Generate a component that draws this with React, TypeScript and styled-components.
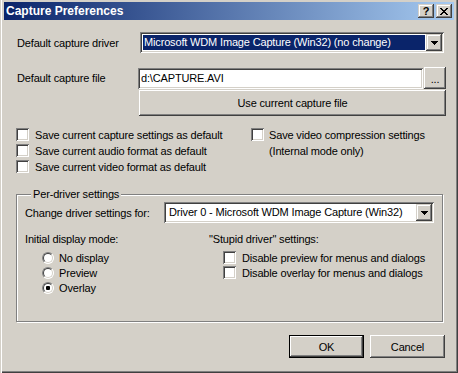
import React from 'react';
import styled, { createGlobalStyle, css } from 'styled-components';

const GlobalStyle = createGlobalStyle`
  html, body {
    margin: 0;
    padding: 0;
    background: #d4d0c8;
  }
  body {
    font-family: "Liberation Sans", Arial, sans-serif;
    font-size: 11px;
    letter-spacing: -0.16px;
    color: #000;
  }
`;

// classic 3D bevels
const raised = css`
  box-shadow: inset -1px -1px #404040, inset 1px 1px #fff, inset -2px -2px #808080;
`;

const raisedSmall = css`
  box-shadow: inset -1px -1px #404040, inset 1px 1px #d4d0c8, inset -2px -2px #808080, inset 2px 2px #fff;
`;

const sunken = css`
  box-shadow: inset 1px 1px #808080, inset -1px -1px #fff, inset 2px 2px #404040, inset -2px -2px #d4d0c8;
`;

const Window = styled.div`
  width: 458px;
  height: 373px;
  box-sizing: border-box;
  padding: 2px 4px 4px 4px;
  background: #d4d0c8;
  box-shadow: inset 1px 0 #d4d0c8, inset 2px 0 #fff, inset -1px -1px #404040, inset -2px -2px #808080;
  display: flex;
  flex-direction: column;
`;

const TitleBar = styled.div`
  height: 18px;
  display: flex;
  align-items: center;
  padding: 0 2px;
  background: linear-gradient(to right, #0a246a, #a6caf0);
`;

const Title = styled.span`
  flex: 1;
  color: #fff;
  font-weight: bold;
  font-size: 12px;
  letter-spacing: 0;
  line-height: 18px;
`;

const CaptionButton = styled.div<{ $gap?: number }>`
  width: 16px;
  height: 14px;
  margin-left: ${p => p.$gap || 0}px;
  background: #d4d0c8;
  ${raisedSmall}
  display: flex;
  align-items: center;
  justify-content: center;
  font-weight: bold;
  font-size: 11px;
  line-height: 14px;
`;

const Client = styled.div`
  flex: 1;
  display: flex;
  flex-direction: column;
`;

const FieldRow = styled.div<{ $top: number; $height: number }>`
  display: flex;
  align-items: center;
  margin-top: ${p => p.$top}px;
  padding-left: 13px;
  height: ${p => p.$height}px;
`;

const FieldLabel = styled.span<{ $width: number }>`
  width: ${p => p.$width}px;
  flex: none;
`;

const Combo = styled.div<{ $width: number }>`
  width: ${p => p.$width}px;
  height: 21px;
  box-sizing: border-box;
  padding: 2px;
  background: #fff;
  ${sunken}
  display: flex;
  flex: none;
`;

const ComboText = styled.div<{ $selected?: boolean }>`
  flex: 1;
  margin: 1px;
  padding-left: ${p => (p.$selected ? 1 : 2)}px;
  line-height: 15px;
  white-space: nowrap;
  overflow: hidden;
  background: ${p => (p.$selected ? '#0a246a' : 'transparent')};
  color: ${p => (p.$selected ? '#fff' : '#000')};
`;

const DropButton = styled.div`
  width: 16px;
  height: 17px;
  background: #d4d0c8;
  ${raisedSmall}
  display: flex;
  align-items: center;
  justify-content: center;
`;

const TextField = styled.div<{ $width: number }>`
  width: ${p => p.$width}px;
  height: 21px;
  box-sizing: border-box;
  padding: 2px 3px;
  line-height: 17px;
  background: #fff;
  ${sunken}
  flex: none;
`;

const PushButton = styled.div<{ $width: number; $height: number; $default?: boolean }>`
  width: ${p => p.$width}px;
  height: ${p => p.$height}px;
  box-sizing: border-box;
  background: #d4d0c8;
  display: flex;
  align-items: center;
  justify-content: center;
  flex: none;
  ${p =>
    p.$default
      ? css`
          border: 1px solid #000;
          ${raised}
        `
      : raised}
`;

const Browse = styled(PushButton)`
  margin-left: 1px;
  align-items: flex-end;
  padding-bottom: 4px;
  align-self: flex-start;
`;

const UseButton = styled(PushButton)`
  margin: 1px 0 0 135px;
`;

const CheckGrid = styled.div`
  display: grid;
  grid-template-columns: 235px 1fr;
  grid-auto-rows: 16px;
  margin: 11px 0 0 12px;
`;

const CheckItem = styled.label<{ $gap?: number }>`
  display: flex;
  align-items: flex-start;
  gap: ${p => p.$gap ?? 6}px;
  line-height: 16px;
`;

const CheckBox = styled.span`
  width: 13px;
  height: 13px;
  flex: none;
  margin-top: 1px;
  background: #fff;
  ${sunken}
`;

const Group = styled.fieldset`
  margin: 13px 0 0 12px;
  padding: 1px 8px 0 8px;
  width: 427px;
  height: 134px;
  box-sizing: border-box;
  border: 1px solid #808080;
  box-shadow: 1px 1px 0 #fff, inset 1px 1px 0 #fff;
  min-inline-size: auto;
`;

const Legend = styled.legend`
  margin-left: 6px;
  padding: 0 2px;
  line-height: 13px;
  background: #d4d0c8;
`;

const GroupRow = styled.div`
  display: flex;
  align-items: center;
  height: 21px;
`;

const Columns = styled.div`
  display: grid;
  grid-template-columns: 184px 1fr;
  margin-top: 10px;
`;

const Column = styled.div`
  display: flex;
  flex-direction: column;
`;

const Heading = styled.div`
  line-height: 13px;
  margin-bottom: 4px;
`;

const OptionRow = styled.label<{ $indent: number; $gap: number }>`
  display: flex;
  align-items: center;
  height: 15px;
  padding-left: ${p => p.$indent}px;
  gap: ${p => p.$gap}px;
`;

const Radio = styled.span<{ $checked?: boolean }>`
  position: relative;
  width: 12px;
  height: 12px;
  flex: none;
  box-sizing: border-box;
  border-radius: 50%;
  border: 1px solid;
  border-color: #808080 #fff #fff #808080;
  background: #fff;

  &::before {
    content: '';
    position: absolute;
    inset: 0;
    border-radius: 50%;
    border: 1px solid;
    border-color: #404040 #d4d0c8 #d4d0c8 #404040;
  }

  &::after {
    content: '';
    display: ${p => (p.$checked ? 'block' : 'none')};
    position: absolute;
    left: 3px;
    top: 3px;
    width: 4px;
    height: 4px;
    border-radius: 1px;
    background: #000;
  }
`;

const SmallCheck = styled(CheckBox)`
  margin-top: 0;
`;

const Footer = styled.div`
  margin-top: auto;
  display: flex;
  justify-content: flex-end;
  gap: 6px;
  padding: 0 9px 11px 0;
`;

const Arrow = () => (
  <svg width="7" height="4" viewBox="0 0 7 4">
    <path d="M0 0h7v1H0zM1 1h5v1H1zM2 2h3v1H2zM3 3h1v1H3z" fill="#000" />
  </svg>
);

const CloseGlyph = () => (
  <svg width="8" height="7" viewBox="0 0 8 7">
    <path
      d="M0 0h2v1H0zM6 0h2v1H6zM1 1h2v1H1zM5 1h2v1H5zM2 2h4v1H2zM3 3h2v1H3zM2 4h4v1H2zM1 5h2v1H1zM5 5h2v1H5zM0 6h2v1H0zM6 6h2v1H6z"
      fill="#000"
    />
  </svg>
);

const topChecks = [
  'Save current capture settings as default',
  'Save current audio format as default',
  'Save current video format as default',
];

const modes = [
  { label: 'No display', checked: false },
  { label: 'Preview', checked: false },
  { label: 'Overlay', checked: true },
];

const stupidOptions = ['Disable preview for menus and dialogs', 'Disable overlay for menus and dialogs'];

export default function App() {
  return (
    <>
      <GlobalStyle />
      <Window>
        <TitleBar>
          <Title>Capture Preferences</Title>
          <CaptionButton>?</CaptionButton>
          <CaptionButton $gap={2}>
            <CloseGlyph />
          </CaptionButton>
        </TitleBar>

        <Client>
          <FieldRow $top={12} $height={21}>
            <FieldLabel $width={123}>Default capture driver</FieldLabel>
            <Combo $width={304}>
              <ComboText $selected>Microsoft WDM Image Capture (Win32) (no change)</ComboText>
              <DropButton>
                <Arrow />
              </DropButton>
            </Combo>
          </FieldRow>

          <FieldRow $top={14} $height={22}>
            <FieldLabel $width={121}>Default capture file</FieldLabel>
            <TextField $width={285}>d:\CAPTURE.AVI</TextField>
            <Browse $width={22} $height={22}>...</Browse>
          </FieldRow>

          <UseButton $width={307} $height={26}>Use current capture file</UseButton>

          <CheckGrid>
            {topChecks.map(text => (
              <CheckItem key={text} style={{ gridColumn: 1 }}>
                <CheckBox />
                {text}
              </CheckItem>
            ))}
            <CheckItem $gap={5} style={{ gridColumn: 2, gridRow: '1 / span 2' }}>
              <CheckBox />
              <span>
                Save video compression settings
                <br />
                (Internal mode only)
              </span>
            </CheckItem>
          </CheckGrid>

          <Group>
            <Legend>Per-driver settings</Legend>
            <GroupRow>
              <FieldLabel $width={139}>Change driver settings for:</FieldLabel>
              <Combo $width={270}>
                <ComboText>Driver 0 - Microsoft WDM Image Capture (Win32)</ComboText>
                <DropButton>
                  <Arrow />
                </DropButton>
              </Combo>
            </GroupRow>

            <Columns>
              <Column>
                <Heading>Initial display mode:</Heading>
                {modes.map(m => (
                  <OptionRow key={m.label} $indent={17} $gap={5}>
                    <Radio $checked={m.checked} />
                    {m.label}
                  </OptionRow>
                ))}
              </Column>
              <Column>
                <Heading>"Stupid driver" settings:</Heading>
                {stupidOptions.map(text => (
                  <OptionRow key={text} $indent={14} $gap={6}>
                    <SmallCheck />
                    {text}
                  </OptionRow>
                ))}
              </Column>
            </Columns>
          </Group>

          <Footer>
            <PushButton $width={75} $height={23} $default>
              OK
            </PushButton>
            <PushButton $width={75} $height={23}>
              Cancel
            </PushButton>
          </Footer>
        </Client>
      </Window>
    </>
  );
}
